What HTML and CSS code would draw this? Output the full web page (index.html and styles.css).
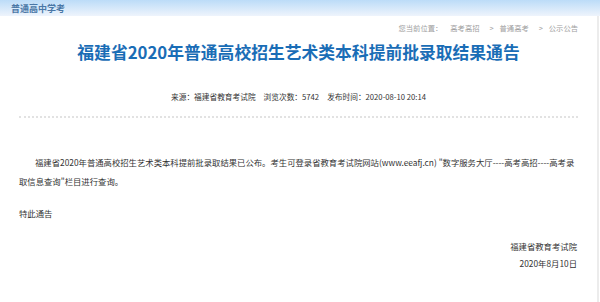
FILE: index.html
```html
<!DOCTYPE html>
<html lang="zh-CN">
<head>
    <meta charset="UTF-8">
    <meta name="viewport" content="width=device-width, initial-scale=1.0">
    <title>福建省2020年普通高校招生艺术类本科提前批录取结果通告</title>
    <link rel="stylesheet" href="styles.css">
</head>
<body>
    <div class="top-bar">
        <span class="site-name">普通高中学考</span>
    </div>
    <div class="page">
        <div class="crumbs">
            <span class="here">您当前位置：</span>
            <span>高考高招</span>
            <span class="sep">&gt;</span>
            <span>普通高考</span>
            <span class="sep">&gt;</span>
            <span>公示公告</span>
        </div>
        <h1 class="title">福建省2020年普通高校招生艺术类本科提前批录取结果通告</h1>
        <div class="meta">
            <span>来源：福建省教育考试院</span>
            <span>浏览次数：5742</span>
            <span>发布时间：2020-08-10 20:14</span>
        </div>
        <div class="article">
            <p class="lead">福建省2020年普通高校招生艺术类本科提前批录取结果已公布。考生可登录省教育考试院网站(www.eeafj.cn) "数字服务大厅----高考高招----高考录取信息查询"栏目进行查询。</p>
            <p class="plain">特此通告</p>
            <p class="sign sign-first">福建省教育考试院</p>
            <p class="sign sign-date">2020年8月10日</p>
        </div>
    </div>
</body>
</html>
```
FILE: styles.css
```css
body {
    margin: 0;
    font-family: "Noto Sans CJK SC", "Noto Sans", sans-serif;
    color: #333;
    background-color: #fff;
}
.top-bar {
    height: 16px;
    padding-left: 11px;
    background: linear-gradient(#bcdcf8, #eef4fc);
    display: flex;
    align-items: center;
}
.site-name {
    font-size: 9px;
    font-weight: bold;
    color: #4a77a6;
}
.page {
    border-right: 2px solid #ececec;
    margin-right: 1px;
    min-height: 286px;
    padding: 0 19px;
}
.crumbs {
    display: flex;
    justify-content: flex-end;
    align-items: center;
    padding-top: 6px;
    padding-right: 0;
    font-size: 7.3px;
    color: #a0a0a0;
    line-height: 12px;
}
.crumbs .here {
    margin-right: 8px;
}
.crumbs .sep {
    margin: 0 6px 0 10px;
}
.title {
    margin: 6px 0 0;
    text-align: center;
    font-size: 16.8px;
    line-height: 24px;
    color: #1a6db6;
}
.meta {
    display: flex;
    justify-content: center;
    gap: 8px;
    margin-top: 27px;
    padding-bottom: 13px;
    font-size: 7.7px;
    line-height: 12px;
    color: #333;
    border-bottom: 2px dotted #e2e2e2;
}
.article {
    padding-top: 35px;
    font-size: 8.35px;
    line-height: 19px;
}
.article p {
    margin: 0;
}
.lead {
    text-indent: 16px;
}
.article .plain {
    margin-top: 13px;
}
.sign {
    text-align: right;
    padding-right: 1px;
}
.article .sign-first {
    margin-top: 14px;
}
.article .sign-date {
    margin-top: -2px;
}
```
